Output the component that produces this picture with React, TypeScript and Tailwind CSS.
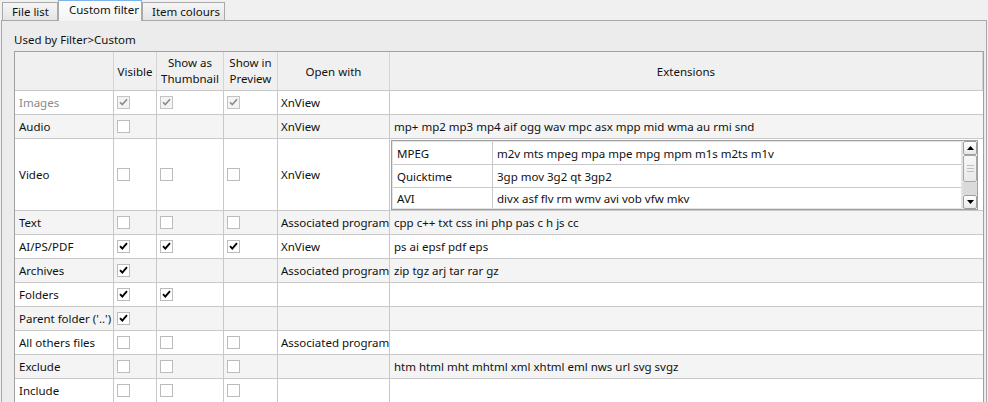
import React from 'react'

type Row = {
  name: string
  vis: number // 0 none, 1 unchecked, 2 checked, 3 disabled checked
  thumb: number
  prev: number
  open: string
  ext: string
  video?: boolean
}

const rows: Row[] = [
  { name: 'Images', vis: 3, thumb: 3, prev: 3, open: 'XnView', ext: '' },
  { name: 'Audio', vis: 1, thumb: 0, prev: 0, open: 'XnView', ext: 'mp+ mp2 mp3 mp4 aif ogg wav mpc asx mpp mid wma au rmi snd' },
  { name: 'Video', vis: 1, thumb: 1, prev: 1, open: 'XnView', ext: '', video: true },
  { name: 'Text', vis: 1, thumb: 1, prev: 1, open: 'Associated program', ext: 'cpp c++ txt css ini php pas c h js cc' },
  { name: 'AI/PS/PDF', vis: 2, thumb: 2, prev: 2, open: 'XnView', ext: 'ps ai epsf pdf eps' },
  { name: 'Archives', vis: 2, thumb: 0, prev: 0, open: 'Associated program', ext: 'zip tgz arj tar rar gz' },
  { name: 'Folders', vis: 2, thumb: 2, prev: 0, open: '', ext: '' },
  { name: "Parent folder ('..')", vis: 2, thumb: 0, prev: 0, open: '', ext: '' },
  { name: 'All others files', vis: 1, thumb: 1, prev: 1, open: 'Associated program', ext: '' },
  { name: 'Exclude', vis: 1, thumb: 1, prev: 1, open: '', ext: 'htm html mht mhtml xml xhtml eml nws url svg svgz' },
  { name: 'Include', vis: 1, thumb: 1, prev: 1, open: '', ext: '' },
]

const videoTypes = [
  { name: 'MPEG', ext: 'm2v mts mpeg mpa mpe mpg mpm m1s m2ts m1v' },
  { name: 'Quicktime', ext: '3gp mov 3g2 qt 3gp2' },
  { name: 'AVI', ext: 'divx asf flv rm wmv avi vob vfw mkv' },
]

const Check = ({ state }: { state: number }) => {
  if (state === 0) return null
  const disabled = state === 3
  return (
    <div
      className={
        'w-[13px] h-[13px] border flex items-center justify-center ' +
        (disabled ? 'border-[#c4c4c4] bg-[#f4f4f4]' : 'border-[#bcbcbc] bg-white')
      }
    >
      {state >= 2 && (
        <svg width="11" height="11" viewBox="0 0 11 11">
          <path
            d="M2 5.2 L4.3 7.6 L9 2.2"
            fill="none"
            stroke={disabled ? '#8a8a8a' : '#000'}
            strokeWidth={disabled ? 1.5 : 1.9}
          />
        </svg>
      )}
    </div>
  )
}

const Tab = ({ label, width, active }: { label: string; width: string; active?: boolean }) => (
  <div
    className={
      width + ' whitespace-nowrap ' +
      (active
        ? 'h-[21px] -mb-px relative z-10 border border-b-0 border-[#a9a9a9] border-t-[#7eb4ea] bg-gradient-to-b from-[#fdfdfd] to-[#f3f3f3] pl-[10px] pt-[1px]'
        : 'h-[18px] mt-[2px] border border-b-0 border-[#a9a9a9] bg-gradient-to-b from-[#f6f6f6] to-[#e4e4e4] pl-[9px] pt-[1px]')
    }
  >
    {label}
  </div>
)

const Scrollbar = () => (
  <div className="w-[15px] flex flex-col border-l border-[#e0e0e0]">
    <div className="h-[14px] border border-[#9e9e9e] rounded-[2px] bg-gradient-to-b from-white to-[#e8e8e8] flex items-center justify-center">
      <svg width="7" height="4" viewBox="0 0 7 4"><path d="M0 4 L3.5 0 L7 4 Z" fill="#000" /></svg>
    </div>
    <div className="h-[27px] border border-[#a6a6a6] rounded-[2px] bg-gradient-to-b from-[#f7f7f7] to-[#e9e9e9] flex flex-col items-center justify-center gap-[2px]">
      <div className="w-[7px] h-px bg-[#c0c0c0]" />
      <div className="w-[7px] h-px bg-[#c0c0c0]" />
      <div className="w-[7px] h-px bg-[#c0c0c0]" />
    </div>
    <div className="flex-1 bg-[#dadada]" />
    <div className="h-[14px] border border-[#9e9e9e] rounded-[2px] bg-gradient-to-b from-white to-[#e8e8e8] flex items-center justify-center">
      <svg width="7" height="4" viewBox="0 0 7 4"><path d="M0 0 L7 0 L3.5 4 Z" fill="#000" /></svg>
    </div>
  </div>
)

const VideoTable = () => (
  <div className="mx-px mt-px h-[70px] border border-[#a0a0a0] bg-white flex">
    <div className="flex-1 border border-[#e4e4e4] flex flex-col">
      {videoTypes.map((v, i) => (
        <div
          key={v.name}
          className={'flex ' + (i < 2 ? 'h-[23px] border-b border-[#c8c8c8]' : 'flex-1')}
        >
          <div className="w-[100px] border-r border-[#c8c8c8] pl-[4px] flex items-center">{v.name}</div>
          <div className="flex-1 pl-[4px] flex items-center">{v.ext}</div>
        </div>
      ))}
    </div>
    <Scrollbar />
  </div>
)

const cols = ['w-[99px]', 'w-[43px]', 'w-[67px]', 'w-[54px]', 'w-[112px]']

export default function App() {
  return (
    <div
      className="w-[988px] h-[402px] overflow-hidden bg-[#f0f0f0] text-[11.5px] leading-[15px] text-[#111] whitespace-nowrap"
      style={{ fontFamily: '"Noto Sans", "DejaVu Sans", sans-serif' }}
    >
      <div className="flex items-end pl-[2px] h-[20px]">
        <Tab label="File list" width="w-[56px]" />
        <Tab label="Custom filter" width="w-[84px]" active />
        <Tab label="Item colours" width="w-[83px]" />
      </div>
      <div className="ml-px w-[986px] h-[382px] border border-b-0 border-[#a9a9a9] bg-[#ececec] pl-[12px] pr-[2px] pt-[11px]">
        <div className="h-[15px]">Used by Filter&gt;Custom</div>
        <div className="mt-[4px] border-l border-t border-r border-[#a0a0a0] bg-white">
          <div className="flex h-[39px] bg-[#f0f0f0] border-b border-[#c8c8c8] text-center">
            <div className={cols[0] + ' border-r border-[#d4d4d4]'} />
            <div className={cols[1] + ' border-r border-[#d4d4d4] flex items-center justify-center'}>Visible</div>
            <div className={cols[2] + ' border-r border-[#d4d4d4] flex items-center justify-center leading-[16px]'}>Show as<br />Thumbnail</div>
            <div className={cols[3] + ' border-r border-[#d4d4d4] flex items-center justify-center leading-[16px]'}>Show in<br />Preview</div>
            <div className={cols[4] + ' border-r border-[#d4d4d4] flex items-center justify-center'}>Open with</div>
            <div className="flex-1 flex items-center justify-center border-r border-[#d4d4d4]">Extensions</div>
          </div>
          {rows.map((r, i) => (
            <div
              key={i}
              className={
                'flex border-b border-[#c8c8c8] ' +
                (r.video ? 'h-[72px] ' : 'h-[24px] ') +
                (i % 2 === 1 ? 'bg-[#f4f4f4]' : 'bg-white')
              }
            >
              <div className={cols[0] + ' border-r border-[#c8c8c8] pl-[4px] flex items-center ' + (r.vis === 3 ? 'text-[#8a8a8a]' : '')}>
                {r.name}
              </div>
              <div className={cols[1] + ' border-r border-[#c8c8c8] pl-[3px] flex items-center'}><Check state={r.vis} /></div>
              <div className={cols[2] + ' border-r border-[#c8c8c8] pl-[3px] flex items-center'}><Check state={r.thumb} /></div>
              <div className={cols[3] + ' border-r border-[#c8c8c8] pl-[3px] flex items-center'}><Check state={r.prev} /></div>
              <div className={cols[4] + ' border-r border-[#c8c8c8] pl-[3px] flex items-center overflow-hidden'}>{r.open}</div>
              <div className="flex-1 min-w-0 pl-[4px] flex items-center">
                {r.video ? <div className="-ml-[4px] w-full self-start"><VideoTable /></div> : r.ext}
              </div>
            </div>
          ))}
        </div>
      </div>
    </div>
  )
}
